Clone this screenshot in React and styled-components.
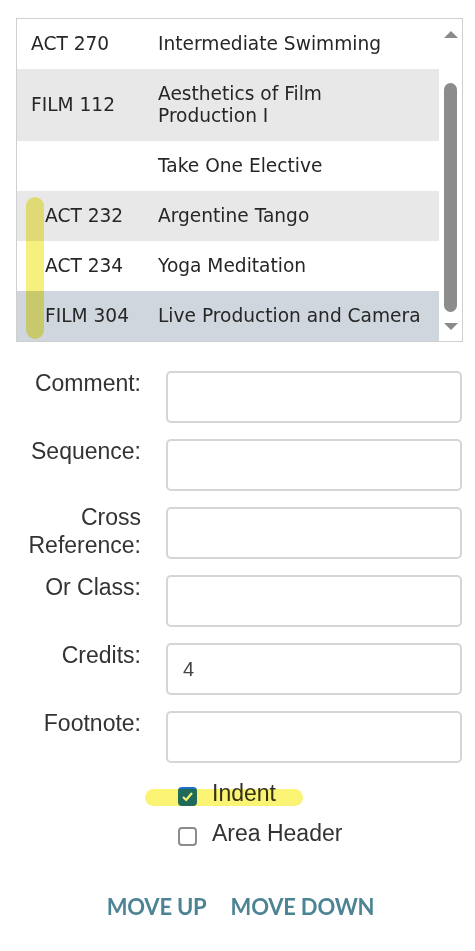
import React from "react";
import styled, { createGlobalStyle } from "styled-components";

const GlobalStyle = createGlobalStyle`
  body {
    margin: 0;
    background: #ffffff;
    font-family: "Liberation Sans", Arial, sans-serif;
  }
`;

const Page = styled.div`
  width: 475px;
  padding: 18px 12px 0 16px;
  box-sizing: border-box;
`;

const ListBox = styled.div`
  position: relative;
  display: flex;
  width: 447px;
  border: 1px solid #cfcfcf;
  box-sizing: border-box;
  background: #fff;
`;

const Rows = styled.div`
  flex: 1;
  display: flex;
  flex-direction: column;
`;

const Row = styled.div`
  display: flex;
  align-items: center;
  min-height: ${({ $tall }) => ($tall ? "72px" : "50px")};
  background: ${({ $tone }) =>
    $tone === "gray" ? "#e8e8e8" : $tone === "selected" ? "#d0d6dd" : "#ffffff"};
  font-family: "DejaVu Sans", Verdana, sans-serif;
  font-size: 18.6px;
  line-height: 22px;
  color: #262626;
`;

const Code = styled.div`
  width: 141px;
  padding-left: ${({ $indent }) => ($indent ? "28px" : "14px")};
  box-sizing: border-box;
  flex-shrink: 0;
`;

const Title = styled.div`
  flex: 1;
`;

const Track = styled.div`
  width: 23px;
  flex-shrink: 0;
  display: flex;
  flex-direction: column;
  align-items: center;
  background: #ffffff;
  padding-top: 12px;
  box-sizing: border-box;
`;

const Arrow = styled.div`
  width: 0;
  height: 0;
  border-left: 7px solid transparent;
  border-right: 7px solid transparent;
  ${({ $down }) =>
    $down ? "border-top: 7px solid #8a8a8a;" : "border-bottom: 7px solid #8a8a8a;"}
`;

const Thumb = styled.div`
  width: 13px;
  height: 229px;
  margin: 45px 0 11px;
  border-radius: 7px;
  background: #8c8c8c;
`;

const Marker = styled.div`
  position: absolute;
  left: 9px;
  top: 178px;
  width: 18px;
  height: 142px;
  border-radius: 9px;
  background: rgba(240, 230, 40, 0.6);
  mix-blend-mode: multiply;
`;

const Form = styled.div`
  display: flex;
  flex-direction: column;
  gap: 16px;
  margin-top: 29px;
`;

const Field = styled.div`
  display: flex;
  align-items: flex-start;
`;

const Label = styled.label`
  width: 125px;
  text-align: right;
  font-size: 23px;
  line-height: 28px;
  color: #333;
  margin-top: ${({ $two }) => ($two ? "-4px" : "-2px")};
`;

const Input = styled.div`
  margin-left: 25px;
  width: 296px;
  height: 52px;
  border: 2px solid #d3d5d8;
  border-radius: 5px;
  box-sizing: border-box;
  display: flex;
  align-items: center;
  padding-left: 15px;
  font-size: 20px;
  color: #444;
`;

const Checks = styled.div`
  display: flex;
  flex-direction: column;
  gap: 14px;
  margin-top: 17px;
  padding-left: 162px;
`;

const CheckRow = styled.label`
  position: relative;
  display: flex;
  align-items: center;
  gap: 15px;
  font-size: 23px;
  line-height: 26px;
  color: #333;
`;

const Box = styled.span`
  width: 19px;
  height: 19px;
  border-radius: 4px;
  box-sizing: border-box;
  margin-top: 6px;
  display: flex;
  align-items: center;
  justify-content: center;
  border: ${({ $on }) => ($on ? "none" : "2px solid #8c8c8c")};
  background: ${({ $on }) => ($on ? "#1f6fc4" : "#fff")};
`;

const Highlight = styled.span`
  position: absolute;
  left: -33px;
  top: 9px;
  width: 158px;
  height: 17px;
  border-radius: 9px;
  background: rgba(248, 236, 40, 0.65);
  mix-blend-mode: multiply;
`;

const Buttons = styled.div`
  display: flex;
  justify-content: center;
  gap: 24px;
  margin-top: 47px;
  padding-left: 2px;
`;

const Button = styled.button`
  border: none;
  background: none;
  padding: 0;
  font-family: Lato, sans-serif;
  font-weight: 700;
  font-size: 22px;
  letter-spacing: -0.2px;
  color: #4d8494;
`;

const courses = [
  { code: "ACT 270", title: "Intermediate Swimming", tone: "white" },
  { code: "FILM 112", title: "Aesthetics of Film Production I", tone: "gray", tall: true },
  { code: "", title: "Take One Elective", tone: "white" },
  { code: "ACT 232", title: "Argentine Tango", tone: "gray", indent: true },
  { code: "ACT 234", title: "Yoga Meditation", tone: "white", indent: true },
  { code: "FILM 304", title: "Live Production and Camera", tone: "selected", indent: true },
];

const fields = [
  { label: "Comment:" },
  { label: "Sequence:" },
  { label: ["Cross", "Reference:"] },
  { label: "Or Class:" },
  { label: "Credits:", value: "4" },
  { label: "Footnote:" },
];

export default function App() {
  return (
    <Page>
      <GlobalStyle />
      <ListBox>
        <Rows>
          {courses.map((c, i) => (
            <Row key={i} $tone={c.tone} $tall={c.tall}>
              <Code $indent={c.indent}>{c.code}</Code>
              <Title>
                {c.tall ? (
                  <>
                    Aesthetics of Film
                    <br />
                    Production I
                  </>
                ) : (
                  c.title
                )}
              </Title>
            </Row>
          ))}
        </Rows>
        <Track>
          <Arrow />
          <Thumb />
          <Arrow $down />
        </Track>
        <Marker />
      </ListBox>

      <Form>
        {fields.map((f, i) => (
          <Field key={i}>
            <Label $two={Array.isArray(f.label)}>
              {Array.isArray(f.label) ? (
                <>
                  {f.label[0]}
                  <br />
                  {f.label[1]}
                </>
              ) : (
                f.label
              )}
            </Label>
            <Input>{f.value}</Input>
          </Field>
        ))}
      </Form>

      <Checks>
        <CheckRow>
          <Box $on>
            <svg width="13" height="13" viewBox="0 0 13 13">
              <path d="M2 7 L5.2 10 L11 3" fill="none" stroke="#fff" strokeWidth="2.2" />
            </svg>
          </Box>
          Indent
          <Highlight />
        </CheckRow>
        <CheckRow>
          <Box />
          Area Header
        </CheckRow>
      </Checks>

      <Buttons>
        <Button>MOVE UP</Button>
        <Button>MOVE DOWN</Button>
      </Buttons>
    </Page>
  );
}
